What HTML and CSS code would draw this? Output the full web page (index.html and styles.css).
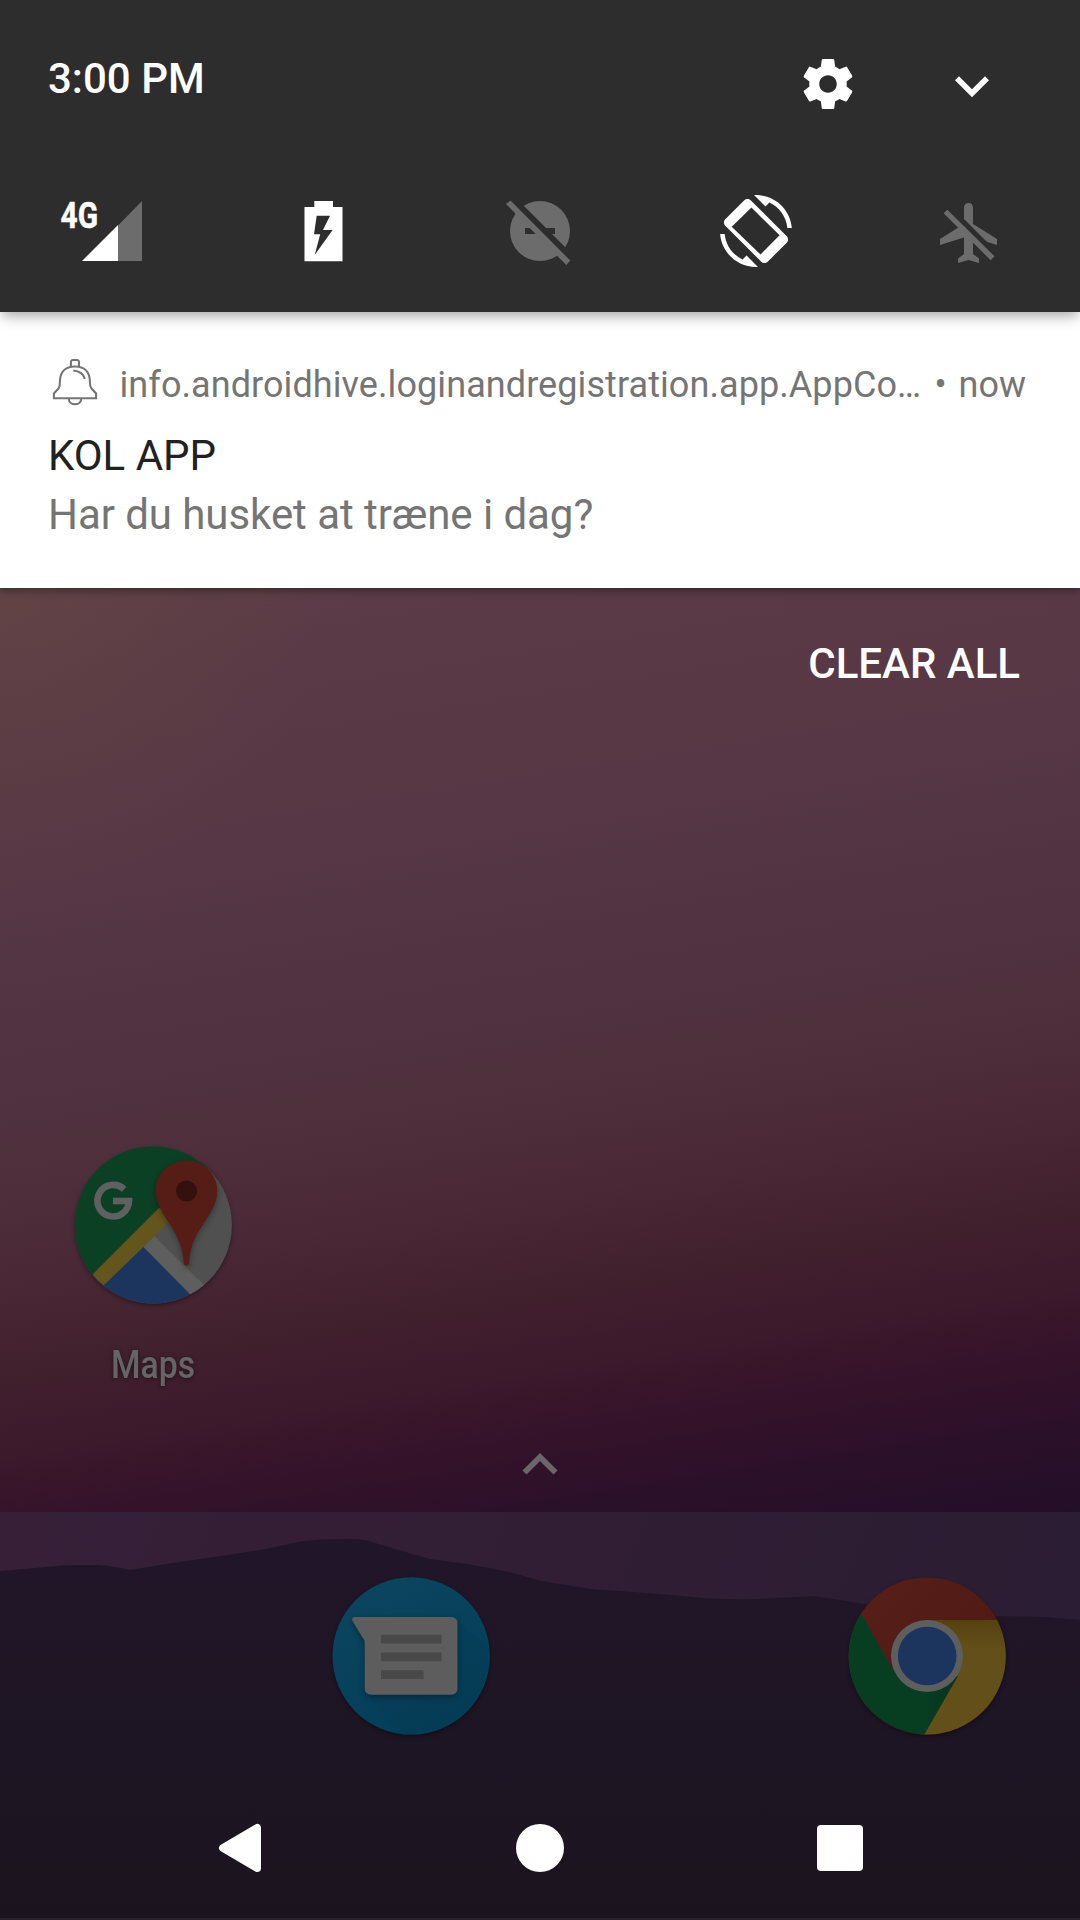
FILE: index.html
```html
<!DOCTYPE html>
<html lang="da">
<head>
<meta charset="utf-8">
<title>Notifications</title>
<link rel="stylesheet" href="styles.css">
</head>
<body>
<div class="screen">
  <svg class="ridge" viewBox="0 0 1080 408" aria-hidden="true">
    <defs>
      <linearGradient id="sky" x1="0" y1="0" x2="1" y2="0.15"><stop offset="0" stop-color="#371f38"/><stop offset=".4" stop-color="#321e35"/><stop offset="1" stop-color="#2b1d33"/></linearGradient>
      <linearGradient id="hill" x1="0" y1="0" x2="0" y2="1"><stop offset="0" stop-color="#211629"/><stop offset=".5" stop-color="#1e1524"/><stop offset="1" stop-color="#1b141e"/></linearGradient>
    </defs>
    <rect width="1080" height="408" fill="url(#sky)"/>
    <path fill="url(#hill)" d="M0 59L69 53L100 53Q118 55 130 58L172 51L227 43L265 37L303 29Q320 27 337 27Q355 26 365 28L392 36L430 47L468 52L510 60L541 69L592 77L661 82L703 86Q740 88 758 87L813 84L840 88L865 92Q900 100 998 104L1047 105L1080 108V408H0Z"/>
    <rect y="406" width="1080" height="2" fill="#28202c"/>
  </svg>

  <header class="quick">
    <div class="quick-top">
      <div class="clock">3:00 PM</div>
      <svg class="gear" viewBox="0 0 24 24"><path d="M19.43 12.98c.04-.32.07-.64.07-.98s-.03-.66-.07-.98l2.11-1.65c.19-.15.24-.42.12-.64l-2-3.46c-.12-.22-.39-.3-.61-.22l-2.49 1c-.52-.4-1.08-.73-1.69-.98l-.38-2.65C14.46 2.18 14.25 2 14 2h-4c-.25 0-.46.18-.49.42l-.38 2.65c-.61.25-1.17.59-1.69.98l-2.49-1c-.23-.09-.49 0-.61.22l-2 3.46c-.13.22-.07.49.12.64l2.11 1.65c-.04.32-.07.65-.07.98s.03.66.07.98l-2.11 1.65c-.19.15-.24.42-.12.64l2 3.46c.12.22.39.3.61.22l2.49-1c.52.4 1.08.73 1.69.98l.38 2.65c.03.24.24.42.49.42h4c.25 0 .46-.18.49-.42l.38-2.65c.61-.25 1.17-.59 1.69-.98l2.49 1c.23.09.49 0 .61-.22l2-3.46c.12-.22.07-.49-.12-.64l-2.11-1.65zM12 15.5c-1.93 0-3.5-1.57-3.5-3.5s1.57-3.5 3.5-3.5 3.5 1.57 3.5 3.5-1.57 3.5-3.5 3.5z"/></svg>
      <svg class="expand" viewBox="0 0 24 24"><path d="M16.59 8.59L12 13.17 7.41 8.59 6 10l6 6 6-6z"/></svg>
    </div>
    <div class="tiles">
      <svg class="tile" viewBox="6 0 96 84">
        <text class="net" x="6.500" y="39" textLength="37.500" lengthAdjust="spacingAndGlyphs">4G</text>
        <path class="off" d="M64 36.500L88 12V72H64Z"/><path d="M28 72L64 36V72Z"/>
      </svg>
      <svg class="tile" viewBox="0 0 96 84">
        <path fill-rule="evenodd" d="M38.300 12H57V18H66.500V72.300H28.500V18H38.300ZM40.700 26.700L38 45.300H44.200L38.700 66L56.600 41H47L54 26.700Z"/>
      </svg>
      <svg class="tile off" viewBox="0 0 96 84">
        <circle cx="48" cy="42" r="30"/>
        <path class="cut" d="M33 39H63V45H33ZM22.500 7.500L81 66L76 73L16 13Z"/>
        <path d="M14 15L18.500 11.500L78.300 71.600L74.300 76Z"/>
      </svg>
      <svg class="tile" viewBox="0 0 96 84">
        <path transform="translate(12 6) scale(3)" fill-rule="evenodd" d="M16.480 2.520c3.270 1.550 5.610 4.720 5.970 8.480h1.500C23.440 4.840 18.290 0 12 0l-.66.03 3.810 3.810 1.330-1.320zM10.230 1.750c-.59-.59-1.540-.59-2.120 0L1.750 8.110c-.59.590-.59 1.540 0 2.120l12.020 12.020c.590.590 1.540.590 2.120 0l6.360-6.360c.590-.590.590-1.540 0-2.120zM13.500 19.850L3.900 10.600L10.500 4.200L19.850 13.450ZM7.520 21.480C4.250 19.940 1.910 16.760 1.550 13H.05C.56 19.160 5.710 24 12 24l.66-.03-3.810-3.810z"/>
      </svg>
      <svg class="tile off" viewBox="0 0 96 84">
        <path transform="translate(10 8) scale(3)" d="M21 16v-2l-8-5V3.500c0-.83-.67-1.500-1.500-1.500S10 2.670 10 3.500V9l-8 5v2l8-2.500V19l-2 1.500V22l3.500-1 3.500 1v-1.500L13 19v-5.500l8 2.500z"/>
        <path class="cut" d="M23 13L74 64L70 71L19 20Z"/>
        <path d="M19.600 24.300L23.400 20.700L70.500 67.300L66.700 71.300Z"/>
      </svg>
    </div>
  </header>

  <section class="card">
    <div class="card-head">
      <svg class="bell" viewBox="48 355 54 54"><path d="M70.900 366V362.500Q70.900 360 73 360H77Q79 360 79 362.500V366M53.900 398.300V393.500L58.500 388.500Q59.900 386.500 59.900 382C59.900 371.500 66 366.500 75 366.500C84 366.500 89.900 371.500 89.900 382Q89.900 386.500 91.500 388.500L96.100 393.500V398.300ZM68.800 399C69 406 81 406 81.200 399M73.300 370.500Q83 371.500 84.800 379"/></svg>
      <span class="app">info.androidhive.loginandregistration.app.AppCo…</span>
      <span class="dot">•</span>
      <span class="when">now</span>
    </div>
    <div class="title">KOL APP</div>
    <div class="text">Har du husket at træne i dag?</div>
  </section>

  <main class="home">
    <div class="clear">CLEAR ALL</div>
    <div class="app-icon">
      <svg class="launcher" viewBox="74 1145 160 164">
        <defs><clipPath id="disc"><circle cx="153.300" cy="1225" r="78.600"/></clipPath></defs>
        <g clip-path="url(#disc)">
          <rect x="74" y="1145" width="160" height="160" fill="#505050"/>
          <path fill="#0c4024" d="M74 1145H205L74 1294Z"/><path fill="#0c4024" d="M74 1145H196L212 1165L160 1208L93 1275L74 1294Z"/>
          <path fill="#63551b" d="M93 1274L159 1208L172 1218L104 1286Z"/>
          <path fill="#1c355e" d="M103 1286L143.500 1247L195 1299L190 1310H100Z"/>
          <path fill="#5e5e5e" d="M143.500 1247L154.500 1236L207 1288L192 1296Z"/>
        </g>
        <path class="pin" fill="#561d17" d="M186.500 1160.500C169 1160.500 155.700 1174 155.700 1191C155.700 1204 163 1213 171 1226C178 1237 183 1249 184 1264Q186.500 1267.500 189 1264C190 1249 194 1237 202 1226C210 1213 217.300 1204 217.300 1191C217.300 1174 204 1160.500 186.500 1160.500Z"/>
        <circle cx="186.500" cy="1191" r="10.500" fill="#34110f"/>
        <path fill="none" stroke="#606060" stroke-width="6.600" d="M124.200 1189.300A15.800 15.800 0 1 0 129 1201H113"/>
      </svg>
      <svg class="label" viewBox="0 0 120 50"><text x="37" y="36" textLength="84" lengthAdjust="spacingAndGlyphs">Maps</text></svg>
    </div>
    <svg class="up" viewBox="0 0 36 22"><path d="M18 0L35.500 17.500L31.500 21.500L18 8L4.500 21.500L.5 17.500Z"/></svg>
  </main>

  <section class="dock">
    <svg class="launcher" viewBox="332 1576 160 164">
      <defs><linearGradient id="msg" x1="0" y1="0" x2=".6" y2="1"><stop offset="0" stop-color="#0c465f"/><stop offset="1" stop-color="#033e5a"/></linearGradient></defs>
      <circle cx="411.200" cy="1656" r="78.700" fill="url(#msg)"/>
      <path fill="#0a3950" opacity=".35" d="M456 1619L489 1648Q487 1700 455 1720Q430 1736 397 1733L366 1693Z"/>
      <path class="pin" fill="#5d5d5d" d="M355 1617H451Q457.500 1617 457.500 1623.500V1688Q457.500 1694.700 451 1694.700H371.500Q364.700 1694.700 364.700 1688V1641L352.500 1621Q351 1617 355 1617Z"/>
      <path fill="#494949" d="M381 1634.700H441.500V1643.500H381ZM381 1652.500H441.500V1661.300H381ZM381 1670.300H423.500V1679H381Z"/>
    </svg>
    <svg class="launcher" viewBox="848 1576 160 164">
      <defs>
        <clipPath id="cdisc"><circle cx="927.200" cy="1656" r="78.600"/></clipPath>
        <linearGradient id="rs" x1="0" y1="0" x2="1" y2="1"><stop offset="0" stop-color="#581f19"/><stop offset="1" stop-color="#4c1713"/></linearGradient>
        <linearGradient id="ys" x1="0" y1="0" x2="0" y2="1"><stop offset="0" stop-color="#56420f"/><stop offset=".25" stop-color="#624f1a"/></linearGradient>
        <linearGradient id="gs" x1="0" y1="0" x2="1" y2="0"><stop offset=".7" stop-color="#073e22"/><stop offset="1" stop-color="#08321d"/></linearGradient>
      </defs>
      <g clip-path="url(#cdisc)">
        <rect x="848" y="1576" width="160" height="160" fill="url(#rs)"/>
        <path fill="url(#ys)" d="M927 1620H1008V1736H923L927 1656Z"/>
        <path fill="url(#gs)" d="M861.500 1614L893 1670L958 1676L923.500 1736H840V1614Z"/>
      </g>
      <circle cx="927" cy="1656" r="36" fill="#5e5e5e"/>
      <circle cx="927.200" cy="1656" r="29.300" fill="#1c355e"/>
    </svg>
  </section>

  <nav class="nav">
    <svg class="back" viewBox="0 0 48 48"><path d="M6.800 24L41.200 3.700V44.300Z"/></svg>
    <svg viewBox="0 0 48 48"><circle cx="24" cy="24" r="24"/></svg>
    <svg viewBox="0 0 48 48"><rect x="1" y="1" width="46" height="46" rx="4"/></svg>
  </nav>
</div>
</body>
</html>
```
FILE: styles.css
```css
body {
  margin: 0;
  font-family: Roboto, "Noto Sans", sans-serif;
}

.screen {
  position: relative;
  display: flex;
  flex-direction: column;
  width: 1080px;
  height: 1920px;
  overflow: hidden;
  background:
    radial-gradient(ellipse 320px 300px at 0 600px, rgba(104, 78, 66, .35), rgba(104, 78, 66, 0)),
    linear-gradient(171deg, #5f3f49 27%, #5a3a46 33.1%, #573745 42.5%, #523342 49.5%, #4f2f3c 56.6%, #4a2836 61.3%, #41202e 66%, #3c192b 69.7%, #34122a 73%, #2b1029 76.5%, #220e28 81%);
}

.screen svg {
  display: block;
  flex: none;
}

/* Lower part of the wallpaper, behind dock and navigation bar */
.screen .ridge {
  position: absolute;
  left: 0;
  bottom: 0;
  width: 1080px;
  height: 408px;
}

.quick {
  position: relative;
  z-index: 2;
  height: 312px;
  box-sizing: border-box;
  padding-top: 50px;
  background: #2d2d2d;
  fill: #fff;
  box-shadow: 0 6px 12px -2px rgba(0, 0, 0, .35);
}

.quick-top {
  display: flex;
  align-items: center;
  height: 68px;
  padding: 0 74px 0 48px;
}

.clock {
  flex: 1;
  align-self: flex-start;
  margin-top: 4px;
  font-size: 42px;
  font-weight: 500;
  line-height: 50px;
  color: #fff;
}

.gear {
  width: 60px;
  height: 60px;
}

.expand {
  width: 68px;
  height: 68px;
  margin-top: 3px;
  margin-left: 80px;
}

.tiles {
  display: flex;
  justify-content: space-between;
  margin-top: 71px;
  padding: 0 60px;
}

.tile {
  width: 96px;
  height: 84px;
}

.off {
  fill: #6c6c6c;
}

.cut {
  fill: #2d2d2d;
}

.net {
  font-size: 36px;
  font-weight: 700;
  stroke: #fff;
  stroke-width: .5;
}

.card {
  position: relative;
  z-index: 1;
  height: 276px;
  box-sizing: border-box;
  padding: 43px 54px 0 48px;
  background: #fff;
  color: #757575;
  box-shadow: 0 3px 8px rgba(0, 0, 0, .35);
}

.card-head {
  display: flex;
  align-items: center;
  height: 54px;
  font-size: 36px;
  line-height: 42px;
  white-space: nowrap;
}

.bell {
  width: 54px;
  height: 54px;
  fill: none;
  stroke: #757575;
  stroke-width: 2.1;
}

.app {
  margin-left: 17.5px;
  padding-top: 6px;
  letter-spacing: .08px;
}

.dot {
  margin-left: auto;
  padding-top: 6px;
}

.when {
  margin-left: 12px;
  padding-top: 6px;
}

.title {
  margin-top: 22px;
  font-size: 42px;
  line-height: 50px;
  color: #212121;
}

.text {
  margin-top: 9px;
  font-size: 42px;
  line-height: 50px;
  letter-spacing: -.06px;
}

.home {
  position: relative;
  display: flex;
  flex-direction: column;
  height: 924px;
  box-sizing: border-box;
  padding-top: 51px;
}

.clear {
  align-self: flex-end;
  margin-right: 60px;
  font-size: 42px;
  font-weight: 500;
  line-height: 50px;
  color: #fff;
}

.app-icon {
  margin-top: 456px;
  margin-left: 74px;
}

.launcher {
  width: 160px;
  height: 164px;
  overflow: visible;
  filter: drop-shadow(0 2px 2px rgba(0, 0, 0, .35));
}

.pin {
  filter: drop-shadow(0 2px 3px rgba(0, 0, 0, .35));
}

.label {
  width: 120px;
  height: 50px;
  margin-top: 33px;
  overflow: visible;
  font-size: 39px;
  font-weight: 500;
  fill: #656565;
  filter: drop-shadow(0 1px 2px rgba(0, 0, 0, .5));
}

.up {
  width: 36px;
  height: 22px;
  margin: 61px auto 0;
  fill: #6a666a;
}

.dock {
  position: relative;
  display: flex;
  justify-content: space-between;
  height: 264px;
  box-sizing: border-box;
  padding: 64px 72px 0 332px;
}

.nav {
  position: relative;
  display: flex;
  justify-content: center;
  align-items: center;
  gap: 252px;
  height: 144px;
  fill: #fff;
}

.nav svg {
  width: 48px;
  height: 48px;
  overflow: visible;
}

.back {
  stroke: #fff;
  stroke-width: 7.600;
  stroke-linejoin: round;
}
```
